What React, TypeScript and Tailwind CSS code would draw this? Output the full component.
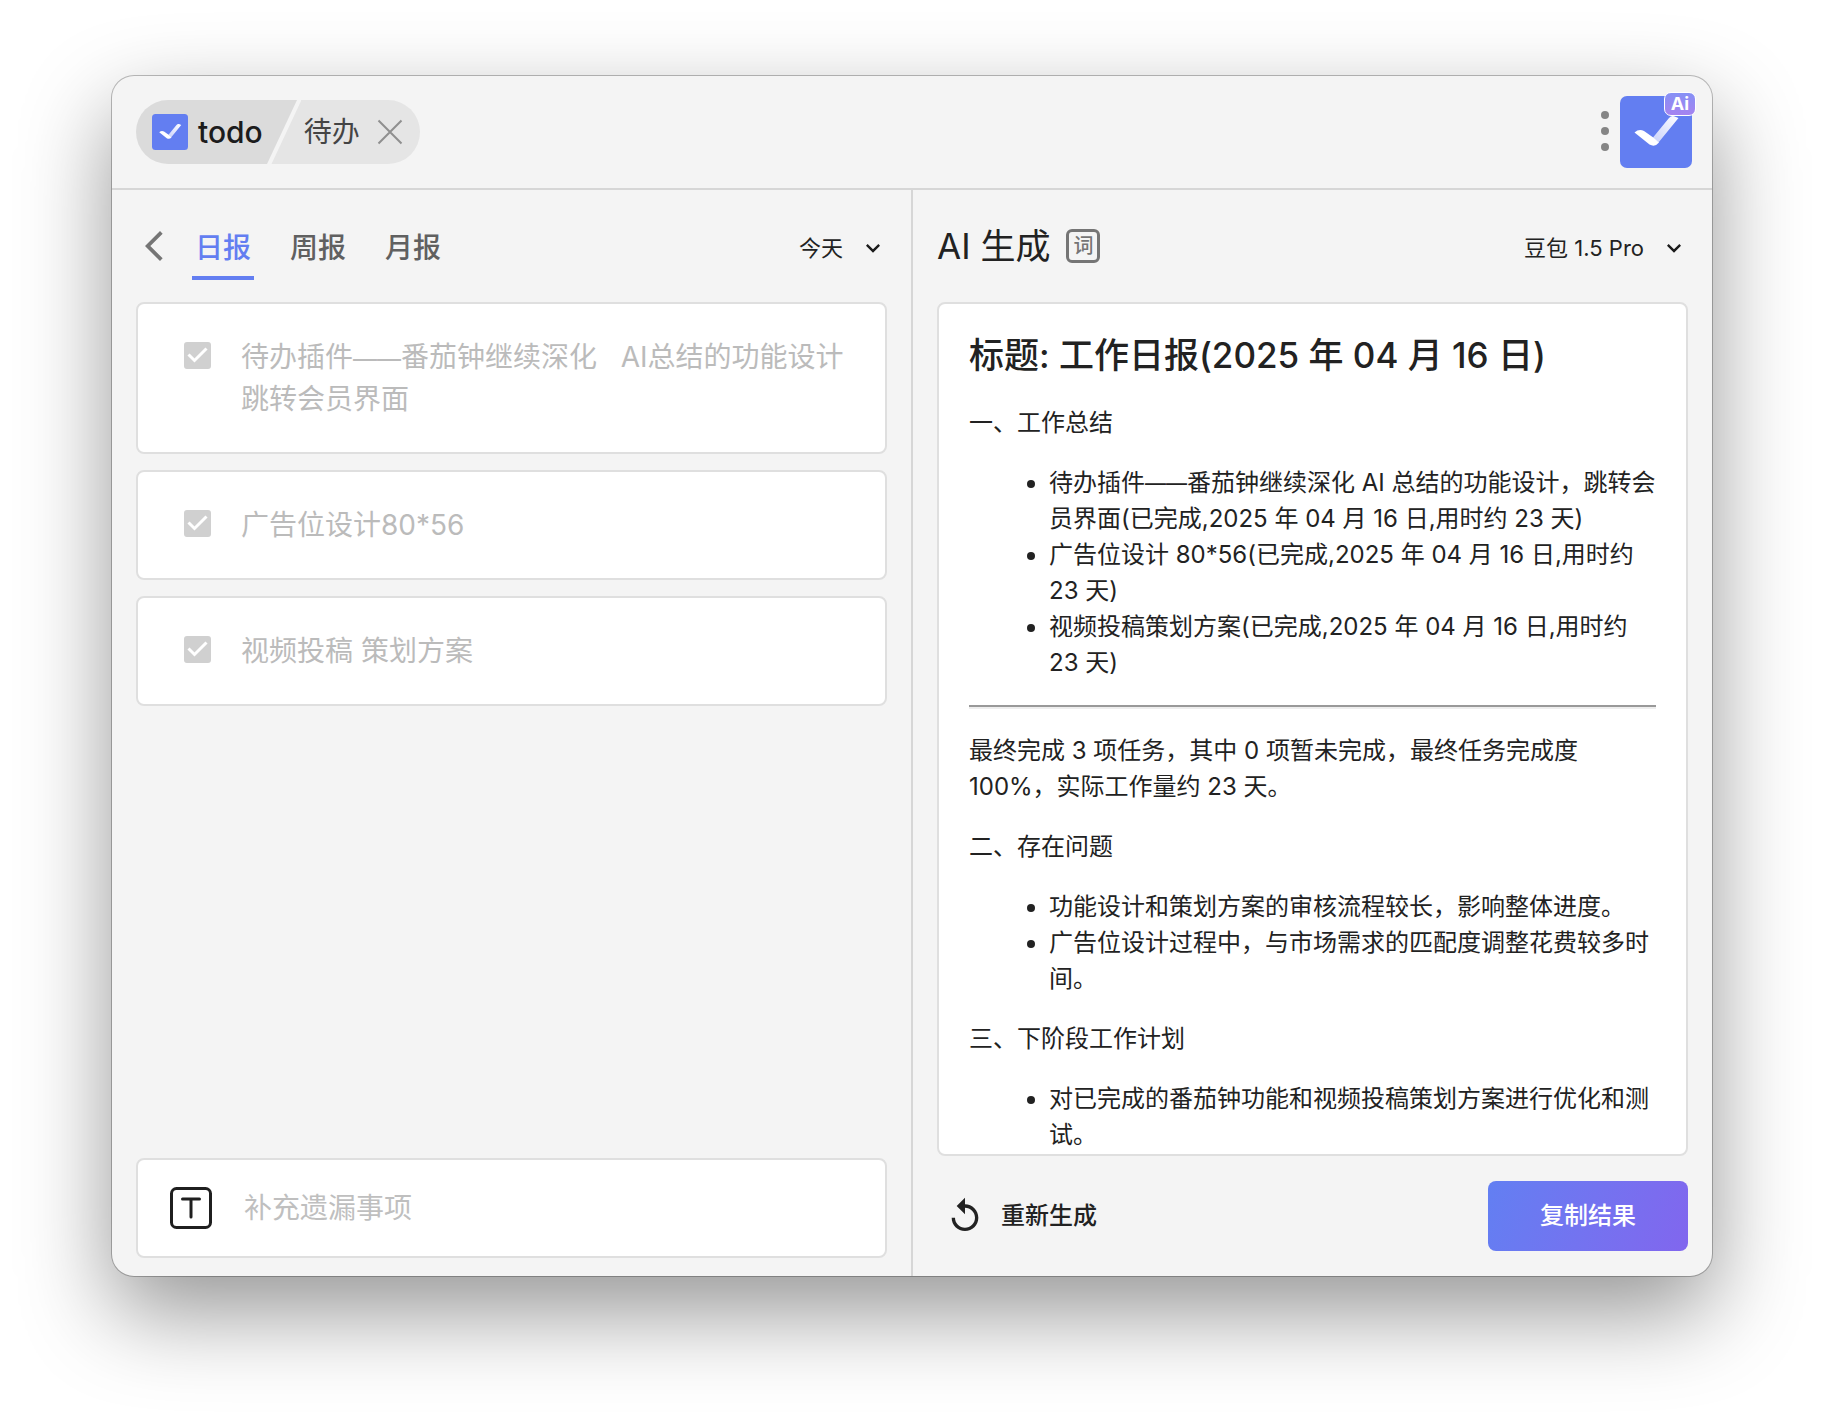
import { Fragment, useState } from "react"
import { MdArrowBackIosNew, MdKeyboardArrowDown, MdReplay } from "react-icons/md"

interface Todo {
	id: string
	text: string
	completed: boolean
}

const TABS = ["日报", "周报", "月报"]

const TODOS: Todo[] = [
	{
		id: "1",
		text: "待办插件——番茄钟继续深化   AI总结的功能设计\n跳转会员界面",
		completed: true,
	},
	{ id: "2", text: "广告位设计80*56", completed: true },
	{ id: "3", text: "视频投稿 策划方案", completed: true },
]

const SUMMARY = [
	"待办插件——番茄钟继续深化 AI 总结的功能设计，跳转会员界面(已完成,2025 年 04 月 16 日,用时约 23 天)",
	"广告位设计 80*56(已完成,2025 年 04 月 16 日,用时约 23 天)",
	"视频投稿策划方案(已完成,2025 年 04 月 16 日,用时约 23 天)",
]

const PROBLEMS = [
	"功能设计和策划方案的审核流程较长，影响整体进度。",
	"广告位设计过程中，与市场需求的匹配度调整花费较多时间。",
]

const PLANS = ["对已完成的番茄钟功能和视频投稿策划方案进行优化和测试。"]

// the dash is too wide next to the text, so it gets a smaller size
function DashText({ text, dash }: { text: string; dash: string }) {
	return (
		<>
			{text.split("——").map((part, i) => (
				<Fragment key={i}>
					{i > 0 && <span className={dash}>——</span>}
					{part}
				</Fragment>
			))}
		</>
	)
}

function CheckLogo({ className }: { className: string }) {
	return (
		<svg viewBox="0 0 72 72" className={className} aria-hidden="true">
			<defs>
				<linearGradient id="tick" x1="1" y1="0" x2="0" y2="1">
					<stop offset="0" stopColor="#ffffff" />
					<stop offset="1" stopColor="#c9d1fb" />
				</linearGradient>
			</defs>
			<rect width="72" height="72" rx="7" fill="#637ef1" />
			<path
				d="M33 41.500L49 22Q51 19.500 54 20.200L58.500 22L38.500 46.500Z"
				fill="url(#tick)"
			/>
			<path
				d="M14.500 36.500Q19 32.500 24 35L34 42L39 46.500Q35 51.500 29.500 48.500Z"
				fill="#ffffff"
			/>
		</svg>
	)
}

function Picker({ label, options }: { label: string; options: string[] }) {
	return (
		<div className="relative flex items-center pt-1">
			<select
				aria-label={label}
				className="field-sizing-content appearance-none bg-transparent pr-11 text-[22px] leading-8 text-[#222222] outline-none"
			>
				{options.map(option => (
					<option key={option}>{option}</option>
				))}
			</select>
			<MdKeyboardArrowDown
				size={28}
				className="pointer-events-none absolute right-0 text-[#1c1c1c]"
			/>
		</div>
	)
}

function TodoCard({ todo }: { todo: Todo }) {
	const [done, setDone] = useState(todo.completed)

	return (
		<label className="flex items-start rounded-lg border-2 border-[#dfdfdf] bg-white py-8 pr-10 pl-[46px]">
			<span className="relative mt-1.5 size-[27px] shrink-0">
				<input
					type="checkbox"
					checked={done}
					onChange={e => setDone(e.target.checked)}
					className="block size-full appearance-none rounded-[3px] border-3 border-[#d0d0d0] checked:bg-[#d0d0d0]"
				/>
				{done && (
					<svg
						viewBox="0 0 27 27"
						fill="none"
						stroke="#ffffff"
						strokeWidth="3"
						className="pointer-events-none absolute inset-0"
					>
						<path d="M4.500 12.500L10.500 18.500L22.500 6.500" />
					</svg>
				)}
			</span>
			<span className="ml-[30px] text-[28px] leading-[42px] whitespace-pre-wrap text-[#bbbbbb]">
				<DashText text={todo.text} dash="text-2xl leading-none" />
			</span>
		</label>
	)
}

function Bullets({ items }: { items: string[] }) {
	return (
		<ul className="my-6 list-disc pl-20">
			{items.map(item => (
				<li key={item}>
					<DashText text={item} dash="text-[21px] leading-none" />
				</li>
			))}
		</ul>
	)
}

export default function App() {
	const [tab, setTab] = useState("日报")
	const [extra, setExtra] = useState("")

	return (
		<div className="flex h-screen flex-col bg-white px-28 pt-[76px] pb-[148px] font-['Inter','Noto_Sans_CJK_SC',sans-serif] text-[#222222] [font-feature-settings:'calt'_0]">
			<div className="flex min-h-0 flex-1 flex-col overflow-hidden rounded-[22px] bg-[#f4f4f4] shadow-[0_0_0_1px_rgba(0,0,0,0.25),0_36px_90px_rgba(0,0,0,0.42)]">
				<header className="flex items-center justify-between border-b-2 border-[#d6d6d6] py-5 pr-5 pl-6">
					<div className="flex h-16">
						<div className="flex items-center gap-2.5 rounded-l-full bg-[#dbdbdb] pl-4">
							<CheckLogo className="size-9" />
							<span className="text-[30px] leading-10 font-medium text-[#1c1c1c]">
								todo
							</span>
						</div>
						<svg width="38" height="64" viewBox="0 0 38 64" aria-hidden="true">
							<path d="M0 0H34L4 64H0Z" fill="#dbdbdb" />
							<path d="M38 0V64H8.500L38 1Z" fill="#e5e5e5" />
						</svg>
						<div className="flex items-center gap-4 rounded-r-full bg-[#e5e5e5] pr-4 pl-[3px]">
							<span className="text-[28px] leading-10 text-[#444444]">待办</span>
							<button aria-label="关闭">
								<svg
									width="28"
									height="28"
									viewBox="0 0 28 28"
									stroke="#8f8f8f"
									strokeWidth="2"
								>
									<path d="M2.500 2.500L25.500 25.500M25.500 2.500L2.500 25.500" />
								</svg>
							</button>
						</div>
					</div>

					<div className="flex items-center gap-[11px]">
						<button aria-label="更多" className="pb-0.5">
							<svg width="8" height="40" viewBox="0 0 8 40" fill="#858585">
								<circle cx="4" cy="4" r="4" />
								<circle cx="4" cy="20" r="4" />
								<circle cx="4" cy="36" r="4" />
							</svg>
						</button>
						<button aria-label="AI 待办" className="relative">
							<CheckLogo className="size-18" />
							<span className="absolute -top-1 -right-1 flex h-6 w-8 items-center justify-center rounded-[7px] border border-white bg-linear-to-b from-[#8590f5] to-[#a583f0] text-lg leading-none font-bold text-white">
								Ai
							</span>
						</button>
					</div>
				</header>

				<main className="grid min-h-0 flex-1 grid-cols-[1fr_2px_1fr]">
					<section className="flex min-h-0 flex-col px-6 pb-[18px]">
						<div className="flex h-28 items-center justify-between">
							<div className="flex items-center">
								<button aria-label="返回" className="mr-5">
									<MdArrowBackIosNew size={36} className="text-[#757575]" />
								</button>
								<nav className="flex gap-[33px] pt-4">
									{TABS.map(name => (
										<button
											key={name}
											onClick={() => setTab(name)}
											className={
												tab === name
													? "border-b-4 border-[#637ef1] px-[3px] pb-2 text-[28px] leading-10 font-medium text-[#637ef1]"
													: "border-b-4 border-transparent px-[3px] pb-2 text-[28px] leading-10 font-medium text-[#606060]"
											}
										>
											{name}
										</button>
									))}
								</nav>
							</div>
							<Picker label="日期" options={["今天", "昨天"]} />
						</div>

						<div className="flex min-h-0 flex-1 flex-col gap-4">
							{TODOS.map(todo => (
								<TodoCard key={todo.id} todo={todo} />
							))}
						</div>

						<label className="flex h-25 items-center rounded-lg border-2 border-[#dfdfdf] bg-white px-8">
							<svg
								width="42"
								height="42"
								viewBox="0 0 42 42"
								fill="none"
								stroke="#1f1f1f"
								strokeWidth="3"
								strokeLinecap="round"
								className="shrink-0"
							>
								<rect x="1.500" y="1.500" width="39" height="39" rx="5" />
								<path d="M12.500 12H29.500M21 12V30" />
							</svg>
							<input
								value={extra}
								onChange={e => setExtra(e.target.value)}
								placeholder="补充遗漏事项"
								aria-label="补充遗漏事项"
								className="ml-8 min-w-0 flex-1 text-[28px] leading-[42px] outline-none placeholder:text-[#bfbfbf]"
							/>
						</label>
					</section>

					<div className="bg-[#d6d6d6]" />

					<section className="flex min-h-0 flex-col px-6">
						<div className="flex h-28 shrink-0 items-center justify-between">
							<div className="flex items-center gap-4">
								<h1 className="text-[35px] leading-[52px]">AI 生成</h1>
								<button
									aria-label="提示词"
									className="flex size-[34px] items-center justify-center rounded-md border-3 border-[#757575] text-xl leading-none font-medium text-[#757575]"
								>
									词
								</button>
							</div>
							<Picker label="模型" options={["豆包 1.5 Pro", "豆包 1.5 Lite"]} />
						</div>

						<article className="min-h-0 flex-1 overflow-hidden rounded-lg border-2 border-[#dfdfdf] bg-white px-[30px] pt-[25px] text-2xl leading-9">
							<h2 className="mb-6 text-[35px] leading-[52px] font-medium">
								标题: 工作日报(2025 年 04 月 16 日)
							</h2>
							<p>一、工作总结</p>
							<Bullets items={SUMMARY} />
							<hr className="my-6 border-t-2 border-b-2 border-t-[#999999] border-b-[#eeeeee]" />
							<p>
								最终完成 3 项任务，其中 0 项暂未完成，最终任务完成度
								100%，实际工作量约 23 天。
							</p>
							<p className="mt-6">二、存在问题</p>
							<Bullets items={PROBLEMS} />
							<p>三、下阶段工作计划</p>
							<Bullets items={PLANS} />
						</article>

						<div className="flex shrink-0 items-center justify-between py-[25px] pl-2">
							<button className="flex items-center gap-4 text-2xl leading-9 font-medium">
								<MdReplay size={40} />
								重新生成
							</button>
							<button className="h-[70px] w-[200px] rounded-lg bg-linear-110 from-[#627ff2] to-[#8166ee] text-2xl leading-9 font-medium text-white">
								复制结果
							</button>
						</div>
					</section>
				</main>
			</div>
		</div>
	)
}
